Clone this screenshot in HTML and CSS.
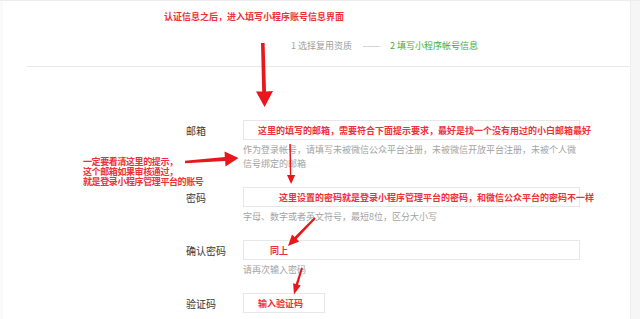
FILE: index.html
```html
<!DOCTYPE html>
<html lang="zh-CN">
<head>
<meta charset="utf-8">
<title>填写小程序帐号信息</title>
<link rel="stylesheet" href="styles.css">
</head>
<body>
<div class="page">
  <main class="main">
    <p class="note-top">认证信息之后，进入填写小程序账号信息界面</p>
    <div class="steps">
      <span class="step">1 选择复用资质</span>
      <span class="step-line"></span>
      <span class="step step-active">2 填写小程序帐号信息</span>
    </div>
    <hr class="divider">
    <form class="form">
      <div class="row">
        <label class="label">邮箱</label>
        <div class="field">
          <div class="box"><span class="val val-email">这里的填写的邮箱，需要符合下面提示要求，最好是找一个没有用过的小白邮箱最好</span></div>
          <p class="hint">作为登录帐号，请填写未被微信公众平台注册，未被微信开放平台注册，未被个人微<br>信号绑定的邮箱</p>
        </div>
      </div>
      <div class="row">
        <label class="label">密码</label>
        <div class="field">
          <div class="box"><span class="val val-pwd">这里设置的密码就是登录小程序管理平台的密码，和微信公众平台的密码不一样</span></div>
          <p class="hint">字母、数字或者英文符号，最短8位，区分大小写</p>
        </div>
      </div>
      <div class="row">
        <label class="label">确认密码</label>
        <div class="field">
          <div class="box"><span class="val val-confirm">同上</span></div>
          <p class="hint">请再次输入密码</p>
        </div>
      </div>
      <div class="row">
        <label class="label">验证码</label>
        <div class="field">
          <div class="box box-code"><span class="val val-code">输入验证码</span></div>
        </div>
      </div>
    </form>
  </main>
  <aside class="scrollbar"></aside>
  <p class="note-left">一定要看清这里的提示，<br>这个邮箱如果审核通过，<br>就是登录小程序管理平台的账号</p>
  <svg class="arrows" width="640" height="319" viewBox="0 0 640 319" xmlns="http://www.w3.org/2000/svg">
    <g fill="#e8171d">
      <polygon points="261,42 264.6,42 266,90.5 273,90 264.6,106 256,90.5 262.2,90.5"/>
      <polygon points="184.9,159.7 224.85,156 224.5,150.5 238.5,157 225.5,165.5 225.15,160 185.1,162.3"/>
      <polygon points="289.3,143 290.8,143 291.3,174 295.2,174 291.1,183 287,174 289.9,174"/>
      <polygon points="314.3,216.3 294.5,236.1 292,233.6 288,245 299.2,240.6 296.7,238.1 315.7,217.7"/>
      <polygon points="301.1,266.7 295.7,283 293.1,282.2 294,293.5 300.7,284.6 298.1,283.8 302.9,267.3"/>
    </g>
  </svg>
</div>
</body>
</html>
```
FILE: styles.css
```css
html, body {
  margin: 0;
  padding: 0;
  background: #ffffff;
  overflow: hidden;
}
body {
  font-family: "Noto Sans CJK SC", "Noto Sans", sans-serif;
  color: #333333;
}
.page {
  position: relative;
  width: 640px;
  height: 319px;
  display: flex;
  border-top: 1px solid #ededed;
  box-sizing: border-box;
}
.main {
  flex: 1;
  border-left: 3px solid #fafafa;
}
.scrollbar {
  width: 9px;
  background: #f6f6f6;
  border-left: 1px solid #eeeeee;
}
.note-top {
  margin: 0;
  padding: 10px 0 0 161px;
  font-size: 9px;
  line-height: 12px;
  font-weight: bold;
  color: #ee3039;
}
.steps {
  display: flex;
  align-items: center;
  margin-top: 17px;
  padding-left: 288px;
  height: 12px;
  font-size: 9px;
  line-height: 12px;
}
.step {
  color: #a0a0a0;
}
.step-active {
  color: #3caf3c;
}
.step-line {
  width: 17px;
  height: 0;
  border-top: 1px solid #d4d4d4;
  margin: 0 10px 0 11px;
}
.divider {
  margin: 14px 0 0 24px;
  border: 0;
  border-top: 1px solid #e8e8e8;
  height: 0;
}
.form {
  margin: 0 0 0 183px;
  padding-top: 53px;
  display: flex;
  flex-direction: column;
  gap: 16px;
}
.row {
  display: flex;
  align-items: flex-start;
}
.label {
  width: 57px;
  font-size: 10px;
  line-height: 21px;
  color: #383838;
}
.field {
  display: flex;
  flex-direction: column;
}
.box {
  width: 337px;
  height: 20px;
  box-sizing: border-box;
  border: 1px solid #e7e7e7;
  background: #ffffff;
}
.box-code {
  width: 82px;
}
.val {
  display: block;
  white-space: nowrap;
  font-size: 9px;
  line-height: 19px;
  font-weight: bold;
  color: #ee3039;
}
.val-email { padding-left: 14px; }
.val-pwd { padding-left: 35px; }
.val-confirm { padding-left: 26px; }
.val-code { padding-left: 14px; }
.hint {
  margin: 3px 0 0;
  font-size: 9px;
  line-height: 14px;
  color: #a3a3a3;
  white-space: nowrap;
}
.note-left {
  position: absolute;
  left: 83px;
  top: 156px;
  margin: 0;
  font-size: 9px;
  letter-spacing: -0.4px;
  line-height: 10px;
  font-weight: bold;
  color: #ee3039;
}
.arrows {
  position: absolute;
  left: 0;
  top: 0;
  pointer-events: none;
}
```
